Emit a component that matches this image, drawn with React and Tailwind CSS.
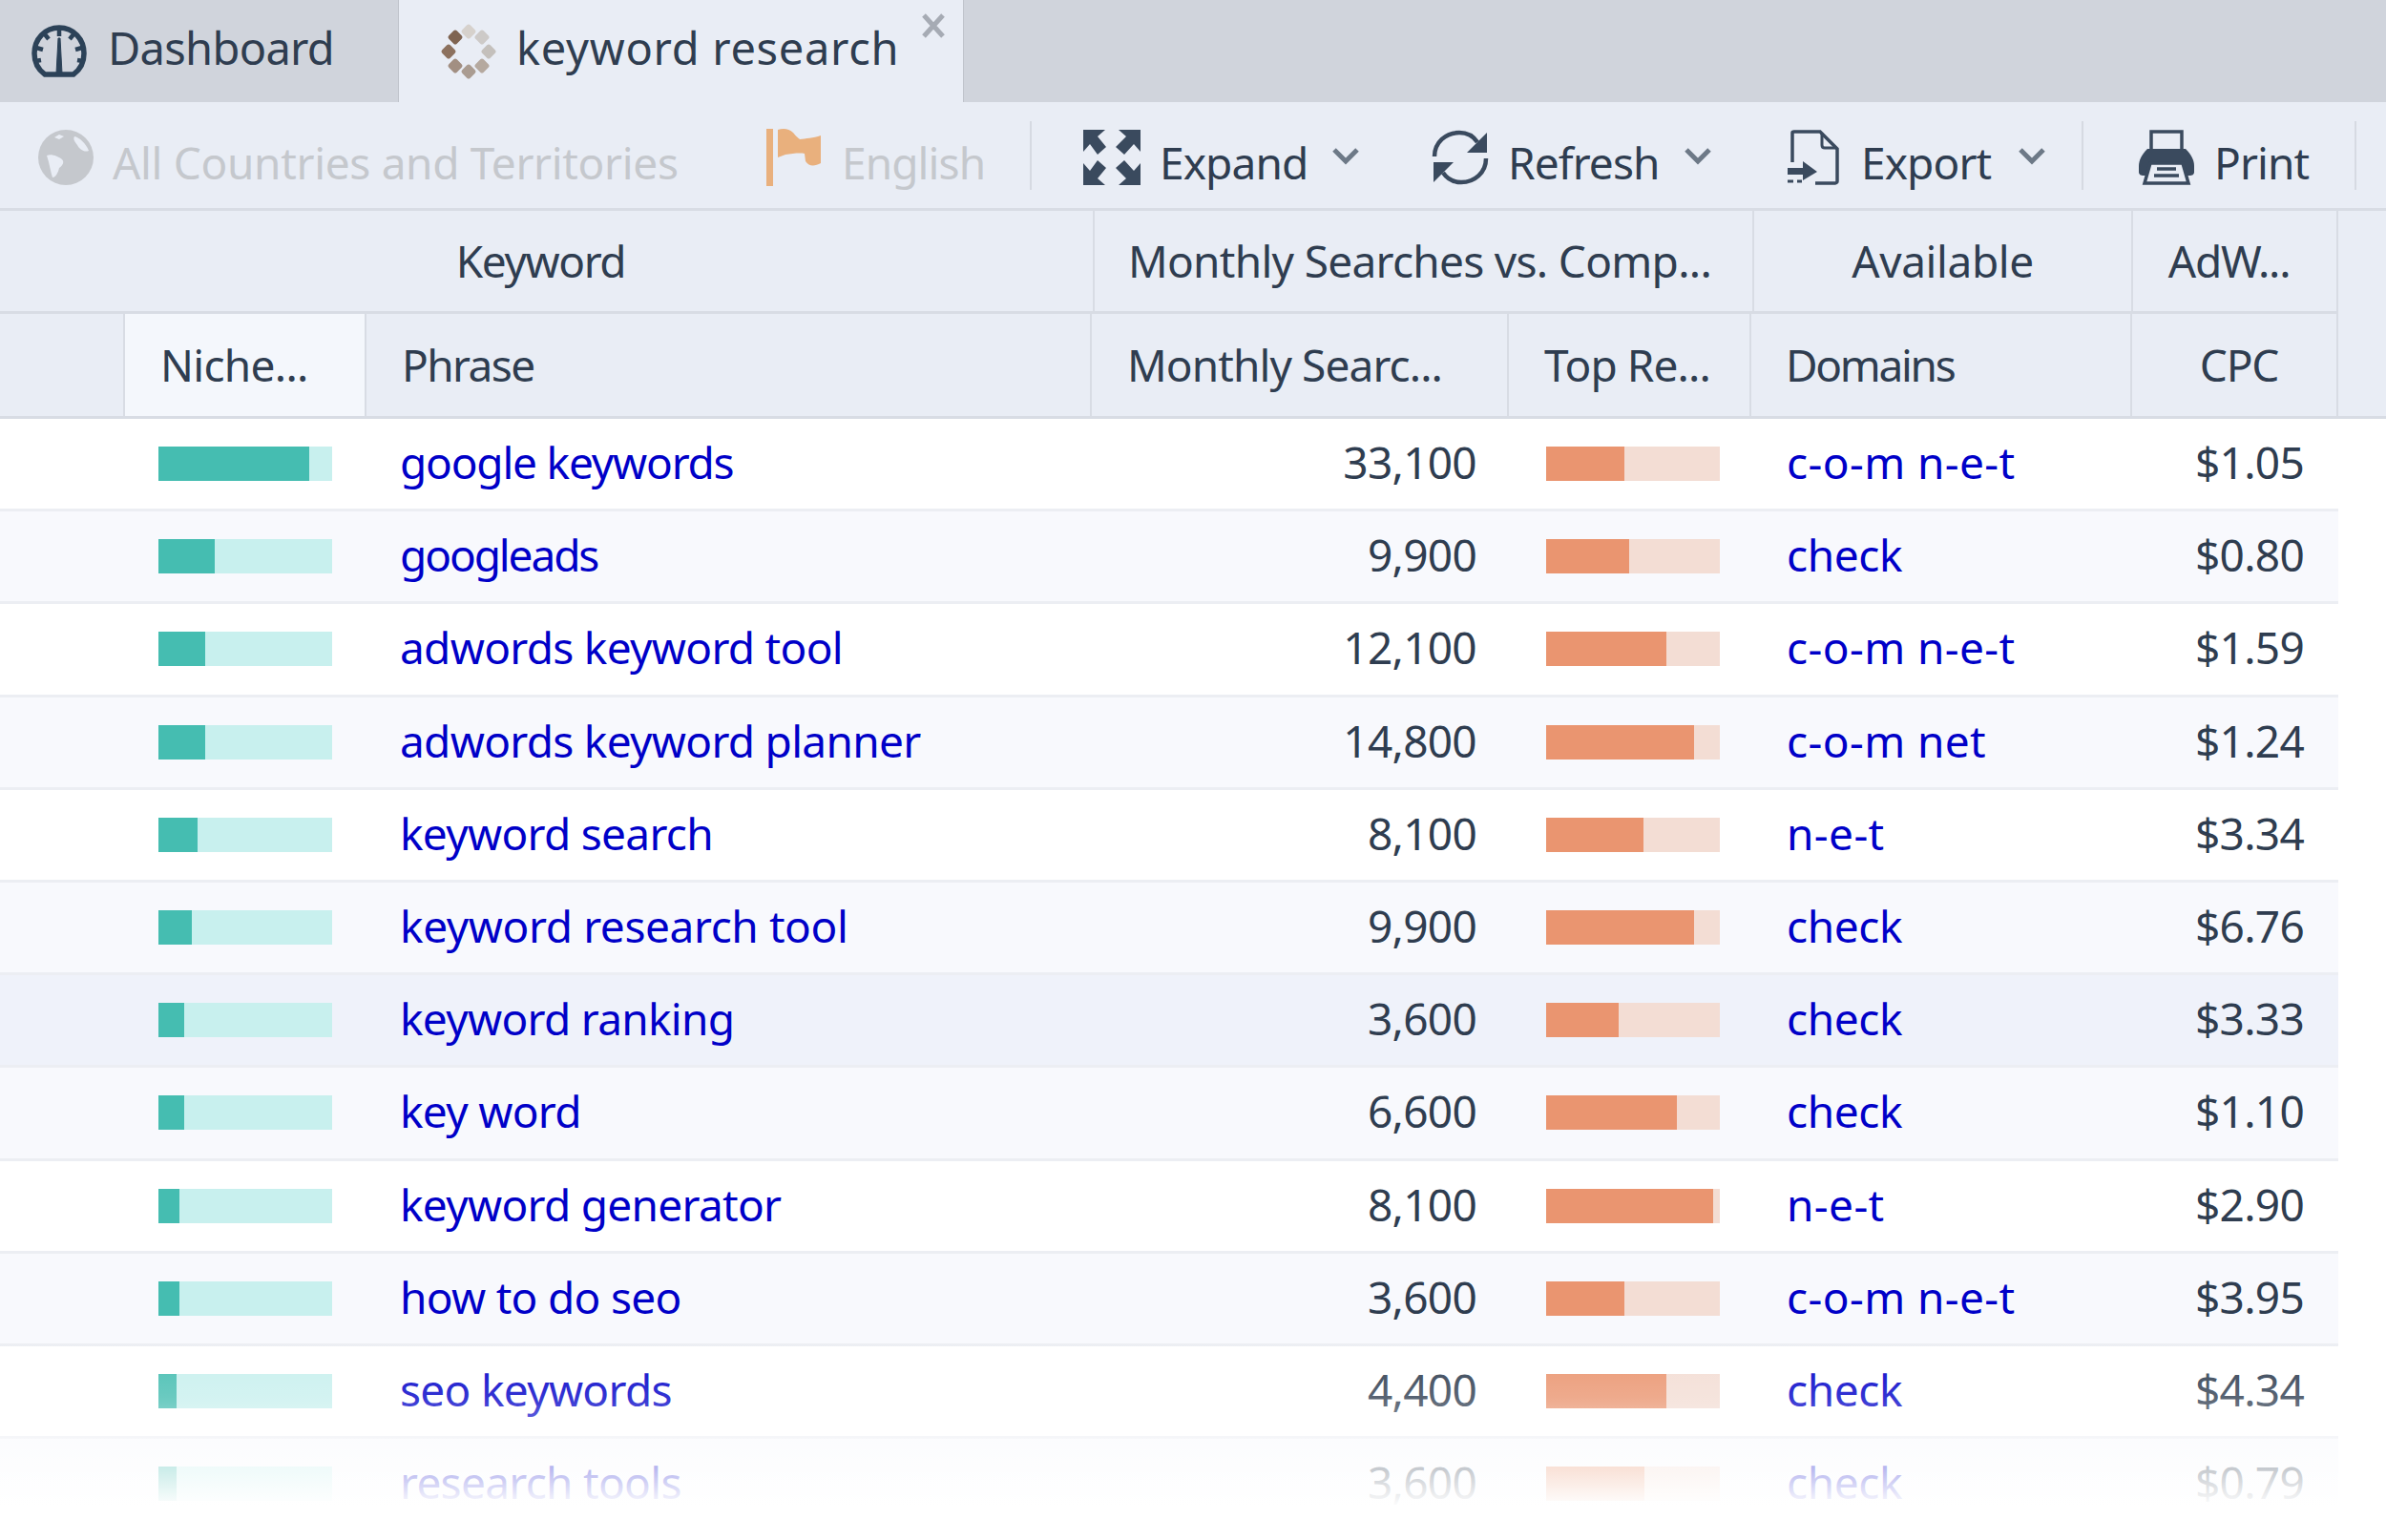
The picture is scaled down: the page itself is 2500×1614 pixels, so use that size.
const rows = [
    { phrase: 'google keywords', spacing: 'tracking-[-1.2px]', searches: '33,100', top: 82, niche: 158, domains: 'c-o-m n-e-t', cpc: '$1.05' },
    { phrase: 'googleads', spacing: 'tracking-[-2.1px]', searches: '9,900', top: 87, niche: 59, domains: 'check', cpc: '$0.80' },
    { phrase: 'adwords keyword tool', searches: '12,100', top: 126, niche: 49, domains: 'c-o-m n-e-t', cpc: '$1.59' },
    { phrase: 'adwords keyword planner', searches: '14,800', top: 155, niche: 49, domains: 'c-o-m net', cpc: '$1.24' },
    { phrase: 'keyword search', searches: '8,100', top: 102, niche: 41, domains: 'n-e-t', cpc: '$3.34' },
    { phrase: 'keyword research tool', spacing: 'tracking-[-0.4px]', searches: '9,900', top: 155, niche: 35, domains: 'check', cpc: '$6.76' },
    { phrase: 'keyword ranking', searches: '3,600', top: 76, niche: 27, domains: 'check', cpc: '$3.33' },
    { phrase: 'key word', searches: '6,600', top: 137, niche: 27, domains: 'check', cpc: '$1.10' },
    { phrase: 'keyword generator', searches: '8,100', top: 175, niche: 22, domains: 'n-e-t', cpc: '$2.90' },
    { phrase: 'how to do seo', searches: '3,600', top: 82, niche: 22, domains: 'c-o-m n-e-t', cpc: '$3.95' },
    { phrase: 'seo keywords', searches: '4,400', top: 126, niche: 19, domains: 'check', cpc: '$4.34' },
    { phrase: 'research tools', searches: '3,600', top: 103, niche: 19, domains: 'check', cpc: '$0.79' },
];

function GaugeIcon() {
    return (
        <svg width="58" height="56" viewBox="0 0 58 56" fill="none" stroke="#2c4258">
            <path d="M14 52C7 47 3 39 3 30C3 15 14 3 29 3C44 3 55 15 55 30C55 39 51 47 44 52Z" strokeWidth="5.5" />
            <path d="M29 5V12M14 10L18 15M44 10L40 15M5 24L12 26M53 24L46 26M4 38L10 37M54 38L48 37" strokeWidth="4.5" />
            <path d="M26 51L28 14H30L32 51Z" fill="#2c4258" strokeWidth="1" />
        </svg>
    );
}

function SpinnerIcon() {
    const dots = [
        [30, 9, '#d6d1cc'],
        [44, 15, '#cdcac8'],
        [51, 30, '#c4c0bc'],
        [44, 45, '#b5a99f'],
        [30, 51, '#aa9c91'],
        [16, 45, '#a28f82'],
        [9, 30, '#8c715e'],
        [16, 15, '#7f6451'],
    ];
    return (
        <svg width="60" height="60" viewBox="0 0 60 60">
            {dots.map(([x, y, c]) => (
                <rect key={`${x}-${y}`} x={x - 6} y={y - 6} width="12" height="12" rx="2.5" fill={c} transform={`rotate(45 ${x} ${y})`} />
            ))}
        </svg>
    );
}

function GlobeIcon() {
    return (
        <svg width="58" height="58" viewBox="0 0 58 58">
            <circle cx="29" cy="29" r="29" fill="#c5c8cd" />
            <path d="M9 27C14 25 21 28 25 31C28 34 25 38 22 40C21 45 18 50 15 50C13 44 12 36 9 27Z" fill="#e9edf5" />
            <path d="M38 7C43 8 50 14 53 22C48 24 43 20 41 16C39 13 36 10 38 7Z" fill="#e9edf5" />
            <path d="M22 5L27 7L22 10L17 8Z" fill="#e9edf5" />
        </svg>
    );
}

function FlagIcon() {
    return (
        <svg width="60" height="60" viewBox="0 0 60 60" fill="#e9b07d">
            <rect x="1" y="0" width="7" height="60" />
            <path d="M13 1C19 -1 25 0 29 4C32 8 34 9 36 11C42 10 50 10 58 7V36C52 39 46 40 42 34L41 26C36 25 28 26 21 27L13 30Z" />
        </svg>
    );
}

function ExpandIcon() {
    return (
        <svg width="60" height="58" viewBox="0 0 60 58" fill="#3a4a5e">
            <path d="M0 0H23L15 7L24 18L15 26L7 15L0 23Z" />
            <path d="M60 0H37L45 7L34 18L43 26L53 15L60 23Z" />
            <path d="M0 58H23L15 51L24 40L15 32L7 43L0 35Z" />
            <path d="M60 58H37L45 51L34 40L43 32L53 43L60 35Z" />
        </svg>
    );
}

function RefreshIcon() {
    return (
        <svg width="60" height="58" viewBox="0 0 60 58" fill="none" stroke="#3a4a5e" strokeWidth="4.5">
            <path d="M3 28C3 13 15 3 29 3C37 3 44 7 48 13" />
            <path d="M57 30C57 45 45 55 31 55C23 55 16 51 12 45" />
            <path d="M58 3V24H37Z" fill="#3a4a5e" stroke="none" />
            <path d="M2 55V34H23Z" fill="#3a4a5e" stroke="none" />
        </svg>
    );
}

function ExportIcon() {
    return (
        <svg className="mr-[3px]" width="54" height="58" viewBox="0 0 54 58" fill="none" stroke="#3a4a5e" strokeWidth="3.5">
            <path d="M5 34V3C5 2 6 2 7 2H34L52 20V54C52 55 51 56 50 56H29" />
            <path d="M36 3V16C36 18 37 19 39 19H51" strokeWidth="3" />
            <path d="M0 40H16V33L31 44L16 53V47H0Z" fill="#3a4a5e" stroke="none" />
            <path d="M0 54H6M10 54H15" strokeWidth="3" />
        </svg>
    );
}

function PrintIcon() {
    return (
        <svg width="60" height="58" viewBox="0 0 60 58">
            <path d="M14 2H46V22H14Z" fill="#e9edf5" stroke="#3a4a5e" strokeWidth="3.5" />
            <path d="M10 20H50C56 26 59 32 59 38V44C59 47 57 48 54 48H6C3 48 1 47 1 44V38C1 32 4 26 10 20Z" fill="#3a4a5e" />
            <path d="M13 35H47L53 56H7Z" fill="#e9edf5" stroke="#3a4a5e" strokeWidth="3.5" />
            <path d="M20 41H40M17 48H43" stroke="#3a4a5e" strokeWidth="3.5" />
        </svg>
    );
}

function Chevron() {
    return (
        <svg width="28" height="18" viewBox="0 0 28 18" fill="none" stroke="#6d7987" strokeWidth="5">
            <path d="M2 2L14 14L26 2" />
        </svg>
    );
}

function Bar({ value, track, fill }) {
    return (
        <div className={`h-[36px] w-[182px] ${track}`}>
            <div className={`h-full ${fill}`} style={{ width: value }} />
        </div>
    );
}

function ToolItem({ icon, label, chevron, className }) {
    return (
        <div className={`flex shrink-0 items-center ${className}`}>
            <span className="mt-[4px] flex">{icon}</span>
            <span className="ml-[20px] mt-[16px]">{label}</span>
            {chevron ? (
                <span className="ml-auto mt-[2px] flex">
                    <Chevron />
                </span>
            ) : null}
        </div>
    );
}

export default function App() {
    return (
        <div className="relative h-[1614px] w-[2500px] overflow-hidden bg-white font-['Noto_Sans',sans-serif] text-[46px] tracking-[-0.7px] text-[#2f3d50]">
            <div className="flex h-[107px] bg-[#d0d4dc] text-[47px]">
                <div className="flex w-[418px] items-center border-r border-[#bfc3cb] pl-[33px]">
                    <GaugeIcon />
                    <span className="ml-[22px] -mt-[7px]">Dashboard</span>
                </div>
                <div className="relative flex w-[592px] items-center border-r border-[#bfc3cb] bg-[#e9edf5] pl-[43px]">
                    <SpinnerIcon />
                    <span className="ml-[20px] -mt-[7px] tracking-[0.7px]">keyword research</span>
                    <svg className="absolute left-[547px] top-[14px]" width="26" height="26" viewBox="0 0 26 26" stroke="#a6abb4" strokeWidth="5">
                        <path d="M3 2L23 24M23 2L3 24" />
                    </svg>
                </div>
            </div>

            <div className="flex h-[114px] items-center border-b-[3px] border-[#d8dce4] bg-[#e9edf5] tracking-[-0.9px]">
                <ToolItem icon={<GlobeIcon />} label="All Countries and Territories" className="ml-[40px] w-[762px] tracking-[-0.33px] text-[#c5c8cd]" />
                <ToolItem icon={<FlagIcon />} label="English" className="w-[277px] text-[#c5c8cd]" />
                <div className="h-[72px] w-[2px] shrink-0 bg-[#d6dae2]" />
                <ToolItem icon={<ExpandIcon />} label="Expand" chevron className="ml-[54px] w-[289px]" />
                <ToolItem icon={<RefreshIcon />} label="Refresh" chevron className="ml-[76px] w-[293px]" />
                <ToolItem icon={<ExportIcon />} label="Export" chevron className="ml-[80px] w-[270px]" />
                <div className="ml-[38px] h-[72px] w-[2px] shrink-0 bg-[#d6dae2]" />
                <ToolItem icon={<PrintIcon />} label="Print" className="ml-[57px] w-[227px]" />
                <div className="h-[72px] w-[2px] shrink-0 bg-[#d6dae2]" />
            </div>

            <div className="bg-[#e9edf5]">
                <div className="grid h-[108px] w-[2450px] grid-cols-[1147px_691px_397px_215px] items-stretch border-b-[3px] border-[#d8dce4]">
                    <div className="flex items-center justify-center border-r-2 border-[#d8dce4] pr-[12px] tracking-[-1.4px]">Keyword</div>
                    <div className="flex items-center justify-center border-r-2 border-[#d8dce4] pr-[8px]">Monthly Searches vs. Comp...</div>
                    <div className="flex items-center justify-center border-r-2 border-[#d8dce4] tracking-[-0.4px]">Available</div>
                    <div className="flex items-center justify-center border-r-2 border-[#d8dce4] pr-[12px] tracking-[-1.3px]">AdW...</div>
                </div>
                <div className="border-b-[3px] border-[#d8dce4]">
                    <div className="grid h-[107px] w-[2450px] grid-cols-[131px_253px_760px_437px_254px_399px_216px] items-stretch">
                        <div className="border-r-2 border-[#d8dce4]" />
                        <div className="flex items-center border-r-2 border-[#d8dce4] bg-[#f4f7fc] pl-[37px]">Niche...</div>
                        <div className="flex items-center border-r-2 border-[#d8dce4] pl-[37px] tracking-[-1.6px]">Phrase</div>
                        <div className="flex items-center border-r-2 border-[#d8dce4] pl-[37px] tracking-[-0.9px]">Monthly Searc...</div>
                        <div className="flex items-center border-r-2 border-[#d8dce4] pl-[37px] tracking-[-0.9px]">Top Re...</div>
                        <div className="flex items-center border-r-2 border-[#d8dce4] pl-[36px] tracking-[-2.3px]">Domains</div>
                        <div className="flex items-center justify-center border-r-2 border-[#d8dce4] pl-[10px] tracking-[-1.1px]">CPC</div>
                    </div>
                </div>
            </div>

            <div className="w-[2450px]">
                {rows.map((row, i) => (
                    <div
                        key={row.phrase}
                        className={`grid h-[97.2px] grid-cols-[131px_253px_760px_437px_254px_399px_216px] items-center border-b-[3px] border-[#eceef3] ${
                            i === 6 ? 'bg-[#eff2fa]' : i % 2 === 1 ? 'bg-[#f8f9fd]' : 'bg-white'
                        }`}
                    >
                        <div />
                        <div className="pl-[35px]">
                            <Bar value={row.niche} track="bg-[#c8f0ee]" fill="bg-[#45bdb1]" />
                        </div>
                        <div className={`pb-[3px] pl-[35px] text-[#0000c8] ${row.spacing || ''}`}>{row.phrase}</div>
                        <div className="pb-[3px] pr-[34px] text-right">{row.searches}</div>
                        <div className="pl-[39px]">
                            <Bar value={row.top} track="bg-[#f3ddd4]" fill="bg-[#ea9570]" />
                        </div>
                        <div className={`pb-[3px] pl-[37px] text-[#0000c8] ${row.domains === 'check' ? 'tracking-[-0.4px]' : 'tracking-[0.4px]'}`}>
                            {row.domains}
                        </div>
                        <div className="pb-[3px] pr-[36px] text-right">{row.cpc}</div>
                    </div>
                ))}
            </div>

            {/* fade over the last rows */}
            <div className="absolute inset-x-0 bottom-0 h-[214px] bg-[linear-gradient(to_bottom,rgba(255,255,255,0)_0%,rgba(255,255,255,0.2)_30%,rgba(255,255,255,0.65)_60%,#ffffff_84%)]" />
        </div>
    );
}
